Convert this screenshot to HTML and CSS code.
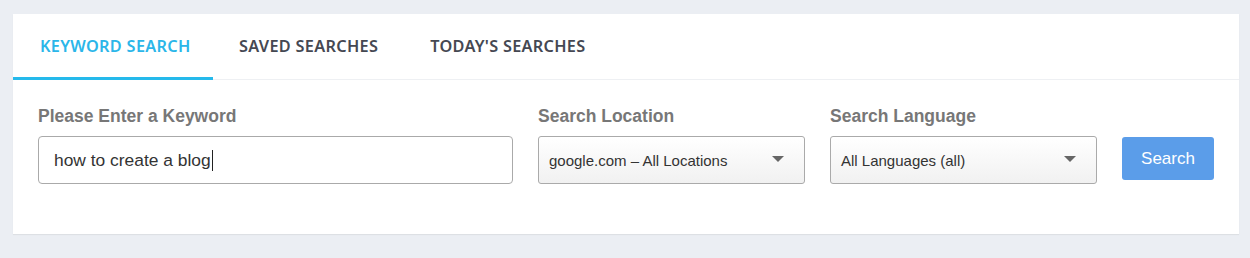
FILE: index.html
```html
<!DOCTYPE html>
<html>
<head>
<meta charset="utf-8">
<link rel="stylesheet" href="styles.css">
</head>
<body>
<div class="card">
  <div class="tabs">
    <div class="tab active">KEYWORD SEARCH</div>
    <div class="tab">SAVED SEARCHES</div>
    <div class="tab">TODAY'S SEARCHES</div>
  </div>
  <div class="form">
    <div class="field kw">
      <div class="label">Please Enter a Keyword</div>
      <div class="input">how to create a blog<span class="caret"></span></div>
    </div>
    <div class="field sel">
      <div class="label">Search Location</div>
      <div class="select"><span>google.com – All Locations</span><span class="arrow"></span></div>
    </div>
    <div class="field sel">
      <div class="label">Search Language</div>
      <div class="select"><span>All Languages (all)</span><span class="arrow"></span></div>
    </div>
    <div class="btn">Search</div>
  </div>
</div>
</body>
</html>
```
FILE: styles.css
```css
html, body { margin: 0; padding: 0; }
body {
  background: #ebeef3;
  width: 1250px;
  height: 258px;
  padding: 14px 11px 0 13px;
  box-sizing: border-box;
  font-family: "Liberation Sans", Arial, sans-serif;
}
.card {
  background: #fff;
  width: 1226px;
  height: 220px;
  box-shadow: 0 1px 1px rgba(0,0,0,0.06);
  box-sizing: border-box;
}
.tabs {
  display: flex;
  border-bottom: 1px solid #eef0f3;
  height: 66px;
  box-sizing: border-box;
}
.tab {
  font-family: "Noto Sans", "Open Sans", sans-serif;
  font-weight: 600;
  font-size: 16.3px;
  color: #454852;
  padding: 0 26px 0 26px;
  line-height: 64px;
  height: 66px;
  box-sizing: border-box;
  letter-spacing: 0.3px;
  white-space: nowrap;
}
.tab.active {
  color: #2bb6e9;
  border-bottom: 3px solid #25b9eb;
  width: 200px;
  padding-left: 27px;
  margin-bottom: -1px;
  height: 66px;
}
.form {
  display: flex;
  align-items: flex-end;
  padding: 26px 25px 0 25px;
  gap: 25px;
}
.field { display: flex; flex-direction: column; }
.label {
  font-weight: bold;
  font-size: 17.5px;
  color: #777;
  line-height: 20px;
  margin-bottom: 10px;
}
.kw { width: 475px; }
.input {
  height: 48px;
  border: 1px solid #aaa;
  border-radius: 4px;
  box-sizing: border-box;
  padding: 0 15px;
  font-size: 17.4px;
  color: #333;
  display: flex;
  align-items: center;
}
.caret {
  display: inline-block;
  width: 1px;
  height: 21px;
  background: #222;
  margin-left: 1px;
}
.sel { width: 267px; }
.select {
  height: 48px;
  border: 1px solid #aaa;
  border-radius: 3px;
  box-sizing: border-box;
  padding: 0 20px 0 10px;
  font-size: 15px;
  color: #333;
  display: flex;
  align-items: center;
  justify-content: space-between;
  background: linear-gradient(#fff, #f1f1f1);
}
.arrow {
  width: 0; height: 0;
  border-left: 6px solid transparent;
  border-right: 6px solid transparent;
  border-top: 6px solid #666;
  margin-top: -2px;
}
.btn {
  width: 92px;
  height: 43px;
  background: #5b9de9;
  border-radius: 3px;
  color: #fff;
  font-size: 17px;
  display: flex;
  align-items: center;
  justify-content: center;
  margin-bottom: 4px;
}
```
